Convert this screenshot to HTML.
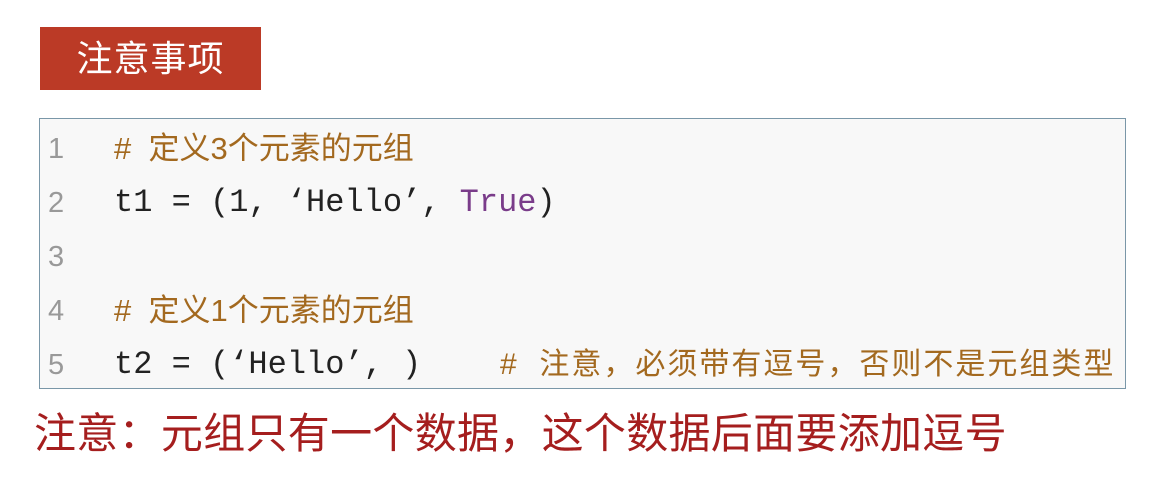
<!DOCTYPE html>
<html><head><meta charset="utf-8"><style>
body{margin:0;width:1166px;height:489px;background:#fff;position:relative;overflow:hidden;font-family:"Liberation Sans","Noto Sans CJK SC",sans-serif}
.tag{position:absolute;left:40px;top:27px;width:221px;height:63px;background:#bb3a26;color:#fff;font-size:36px;line-height:63px;text-align:center;letter-spacing:1px}
.box{position:absolute;left:39px;top:118px;width:1085px;height:269px;background:#f8f8f8;border:1px solid #7a97a8}
.l{position:absolute;left:0;height:54px;line-height:54px;white-space:nowrap}
.n{position:absolute;left:8px;color:#999;font-size:29px;font-family:"Liberation Sans",sans-serif}
.c{position:absolute;left:74px;font-family:"Liberation Mono","Noto Sans CJK SC",monospace;font-size:32px;color:#222}
.cm{color:#a3691f;font-family:"Liberation Sans","Noto Sans CJK SC",sans-serif;font-size:31px}
.kw{color:#7a3c8a}
.note{position:absolute;left:34px;top:400px;font-size:42px;color:#a51e1e;letter-spacing:0.3px;font-family:"Liberation Sans","Noto Sans CJK SC",sans-serif}
</style></head><body>
<div class="tag">注意事项</div>
<div class="box">
<div class="l" style="top:3px"><span class="n">1</span><span class="c"><span class="cm">#&nbsp; 定义3个元素的元组</span></span></div>
<div class="l" style="top:57px"><span class="n">2</span><span class="c">t1 = (1, ‘Hello’, <span class="kw">True</span>)</span></div>
<div class="l" style="top:111px"><span class="n">3</span></div>
<div class="l" style="top:165px"><span class="n">4</span><span class="c"><span class="cm">#&nbsp; 定义1个元素的元组</span></span></div>
<div class="l" style="top:219px"><span class="n">5</span><span class="c">t2 = (‘Hello’, )</span><span class="c cm" style="left:460px;font-size:30px;letter-spacing:2px">#&nbsp; 注意，必须带有逗号，否则不是元组类型</span></div>
</div>
<div class="note">注意：元组只有一个数据，这个数据后面要添加逗号</div>
</body></html>
